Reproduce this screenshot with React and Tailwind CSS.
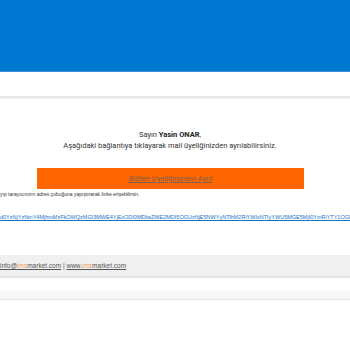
export default function App() {
  const link =
    "d0YzNjYzNmY4MjhmMzFkOWQzMGI3MWE4YjExODI0MDIwZWE2MDI5OGUzNjE5NWYyNTlhM2RiYWIxNTIyYWU5MGE5MjI0YmRiYTY1OGRiOTZmNDI1ZTk4";
  return (
    <div className="w-[350px] h-[350px] overflow-hidden bg-white" style={{ fontFamily: "Roboto, 'Liberation Sans', sans-serif" }}>
      <div className="h-[72px] bg-[#0079d3] border-b border-[#3d8fd4]" />
      <div className="h-[24px] bg-white" />
      <div className="h-[3px] bg-[#e8e8e8] border-b border-[#f0f0f0]" />
      <div className="pr-[10px] pt-[30px] flex flex-col items-center text-[#333]">
        <div className="text-[7.5px] leading-[11px]">
          Sayın <span className="font-bold text-[#222]">Yasin ONAR</span>,
        </div>
        <div className="text-[7.5px] leading-[11px]">
          Aşağıdaki bağlantıya tıklayarak mail üyeliğinizden ayrılabilirsiniz.
        </div>
      </div>
      <div className="mt-[17px] ml-[37px] w-[267px] h-[21px] bg-[#ff6600] flex items-center justify-center">
        <span className="text-[7.5px] text-[#7a5f52] underline">Bülten Üyeliğinizden Ayrıl</span>
      </div>
      <div className="mt-[1px] text-[5px] leading-[8px] text-[#333] whitespace-nowrap" style={{ fontFamily: "'Liberation Sans', Arial, sans-serif" }}>
        yıp tarayıcınızın adres çubuğuna yapıştırarak linke erişebilirsin.
      </div>
      <div className="mt-[15px] w-[350px] overflow-hidden whitespace-nowrap text-[5.5px] leading-[8px] text-[#1a73c8] underline" style={{ fontFamily: "'Liberation Sans', Arial, sans-serif" }}>
        {link}
      </div>
      <div className="mt-[34px] h-[23px] bg-[#f0f0f0] border-b-2 border-[#e2e2e2] flex items-center text-[6.5px] text-[#555]" style={{ fontFamily: "'Liberation Sans', Arial, sans-serif" }}>
        <span>
          <span className="underline">info@<span className="text-[#f0a050]">ims</span>market.com</span>
          {" | "}
          <span className="underline">www.<span className="text-[#f0a050]">ims</span>market.com</span>
        </span>
      </div>
      <div className="mt-[13px] h-[9px] bg-[#f7f7f7] border-b border-[#e4e4e4]" />
    </div>
  );
}
